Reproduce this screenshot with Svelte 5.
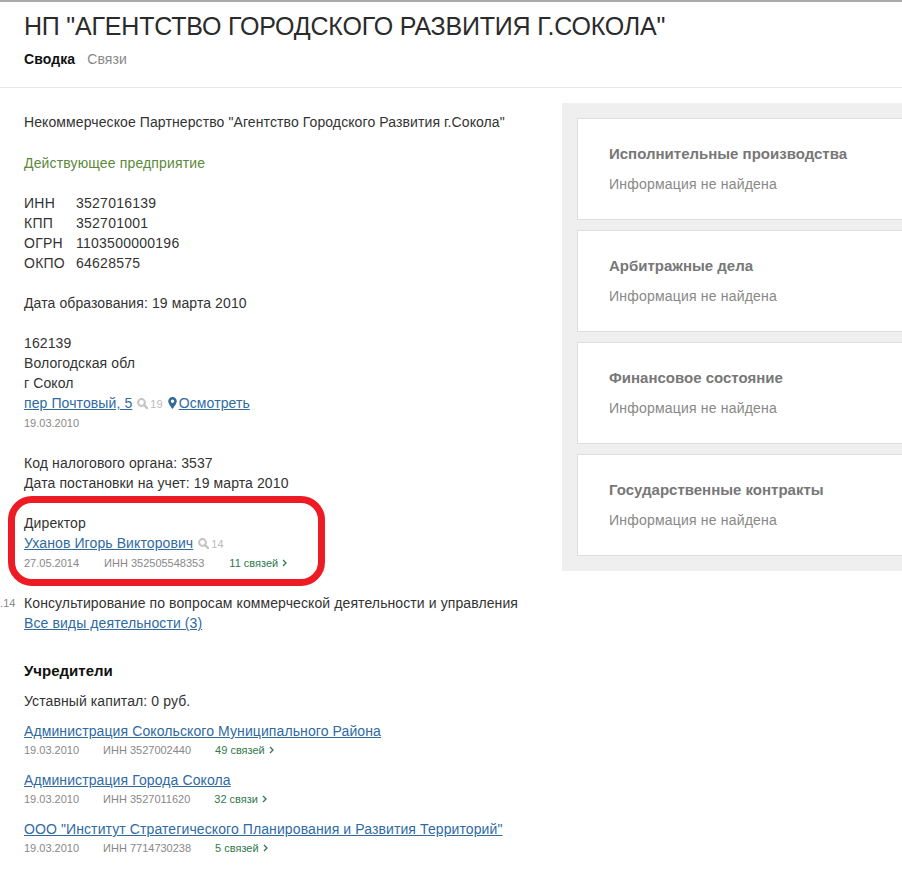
<script>
  const cards = ['Исполнительные производства', 'Арбитражные дела', 'Финансовое состояние', 'Государственные контракты'];
  const codes = [
    ['ИНН', '3527016139'],
    ['КПП', '352701001'],
    ['ОГРН', '1103500000196'],
    ['ОКПО', '64628575'],
  ];
  const founders = [
    { name: 'Администрация Сокольского Муниципального Района', inn: '3527002440', rel: '49 связей' },
    { name: 'Администрация Города Сокола', inn: '3527011620', rel: '32 связи' },
    { name: 'ООО "Институт Стратегического Планирования и Развития Территорий"', inn: '7714730238', rel: '5 связей' },
  ];
</script>

{#snippet lens()}
  <svg class="lens" width="11" height="11" viewBox="0 0 11 11" aria-hidden="true">
    <circle cx="4.5" cy="4.5" r="3.4" fill="none" stroke="#c4c4c4" stroke-width="2" />
    <path d="M7 7l3.2 3.2" stroke="#c4c4c4" stroke-width="2.4" stroke-linecap="round" />
  </svg>
{/snippet}

{#snippet chevron()}
  <svg class="chev" width="5" height="8" viewBox="0 0 5 8" aria-hidden="true">
    <path d="M1 1l3 3-3 3" fill="none" stroke="#2f7a4c" stroke-width="1.3" />
  </svg>
{/snippet}

<div class="page">
  <header>
    <h1>НП "АГЕНТСТВО ГОРОДСКОГО РАЗВИТИЯ Г.СОКОЛА"</h1>
    <nav><b>Сводка</b><a href="#links">Связи</a></nav>
  </header>

  <div class="body">
    <main>
      <p class="first">Некоммерческое Партнерство "Агентство Городского Развития г.Сокола"</p>
      <p class="status">Действующее предприятие</p>

      <div class="codes">
        {#each codes as [label, value]}
          <span>{label}</span><span>{value}</span>
        {/each}
      </div>

      <p>Дата образования: 19 марта 2010</p>

      <div class="block">
        <div>162139</div>
        <div>Вологодская обл</div>
        <div>г Сокол</div>
        <div class="row">
          <a href="#addr">пер Почтовый, 5</a>
          <span class="hits">{@render lens()}19</span>
          <svg class="pin" width="9" height="12" viewBox="0 0 9 12" aria-hidden="true">
            <path fill-rule="evenodd" fill="#336a9e" d="M4.5 0A4.3 4.3 0 0 0 .2 4.3C.2 7 4.5 12 4.5 12s4.3-5 4.3-7.7A4.3 4.3 0 0 0 4.5 0zm0 2.6a1.7 1.7 0 1 1 0 3.4 1.7 1.7 0 0 1 0-3.4z" />
          </svg>
          <a href="#map">Осмотреть</a>
        </div>
        <div class="meta"><span>19.03.2010</span></div>
      </div>

      <div class="block">
        <div>Код налогового органа: 3537</div>
        <div>Дата постановки на учет: 19 марта 2010</div>
      </div>

      <div class="block director">
        <div>Директор</div>
        <div class="row"><a href="#head">Уханов Игорь Викторович</a> <span class="hits">{@render lens()}14</span></div>
        <div class="meta">
          <span>27.05.2014</span>
          <span>ИНН 352505548353</span>
          <a class="rel" href="#rel">11 связей {@render chevron()}</a>
        </div>
        <div class="mark"></div>
      </div>

      <div class="block activity">
        <span class="cut">.14</span>
        <div>Консультирование по вопросам коммерческой деятельности и управления</div>
        <div><a href="#all">Все виды деятельности (3)</a></div>
      </div>

      <h2>Учредители</h2>
      <p class="capital">Уставный капитал: 0 руб.</p>

      {#each founders as f}
        <div class="founder">
          <div><a href="#f">{f.name}</a></div>
          <div class="meta">
            <span>19.03.2010</span>
            <span>ИНН {f.inn}</span>
            <a class="rel" href="#rel">{f.rel} {@render chevron()}</a>
          </div>
        </div>
      {/each}
    </main>

    <aside>
      {#each cards as title}
        <section>
          <h3>{title}</h3>
          <div>Информация не найдена</div>
        </section>
      {/each}
    </aside>
  </div>
</div>

<style>
  :global(body) { background: #fff; }
  .page {
    width: 902px;
    min-height: 872px;
    overflow: hidden;
    font: 14px/20px "Liberation Sans", Arial, sans-serif;
    letter-spacing: 0.1px;
    color: #333;
    border-top: 2px solid #a9a9a9;
    box-sizing: border-box;
  }
  header { box-sizing: border-box; height: 86px; padding: 9px 24px 0; border-bottom: 1px solid #e6e6e6; }
  h1 { margin: 0; font-size: 25px; line-height: 30px; font-weight: 400; letter-spacing: -0.2px; color: #2b2b2b; white-space: nowrap; }
  nav { margin-top: 8px; display: flex; gap: 12px; }
  nav b { color: #111; }
  nav a { color: #888; text-decoration: none; }

  .body { display: flex; align-items: flex-start; }
  main { flex: 1; min-width: 0; padding: 24px 0 0 24px; }
  p { margin: 20px 0 0; }
  p.first { margin: 0; }
  p.status { margin-top: 21px; color: #5b8a3a; letter-spacing: 0.15px; }

  .codes { margin-top: 20px; display: grid; grid-template-columns: 52px auto; justify-content: start; letter-spacing: 0.25px; }
  .block { margin-top: 20px; position: relative; }
  .row { height: 20px; }
  a { color: #2f6aa3; text-decoration: underline; }

  .hits { font-size: 11px; color: #bbb; margin-left: 1px; }
  .lens { vertical-align: -1px; margin-right: 2px; }
  .pin { vertical-align: -1px; margin: 0 -2px 0 1px; }

  .meta { display: flex; gap: 25px; height: 20px; font-size: 11px; letter-spacing: 0; color: #888; }
  .rel { color: #2f7a4c; text-decoration: none; }
  .chev { vertical-align: 0; margin-left: 1px; }

  .mark {
    position: absolute;
    left: -16px;
    top: -17px;
    width: 317px;
    height: 90px;
    box-sizing: border-box;
    border: 7px solid #ed1c24;
    border-radius: 24px;
    pointer-events: none;
  }

  .cut { position: absolute; left: -24px; top: 0; font-size: 11px; color: #888; }

  h2 { margin: 28px 0 0; font-size: 15px; line-height: 20px; letter-spacing: 0; color: #111; }
  p.capital { margin-top: 10px; }
  .founder { margin-top: 10px; }
  .founder .meta { margin-top: -1px; gap: 24px; }

  aside {
    width: 340px;
    flex: none;
    margin-top: 15px;
    padding: 15px 0 15px 15px;
    box-sizing: border-box;
    background: #efefef;
    display: flex;
    flex-direction: column;
    gap: 10px;
    letter-spacing: 0.2px;
  }
  section {
    height: 102px;
    box-sizing: border-box;
    padding: 25px 0 0 31px;
    background: #fff;
    border: 1px solid #dedede;
    border-right: 0;
    color: #888;
  }
  h3 { margin: 0 0 10px; font-size: 15px; line-height: 20px; letter-spacing: 0; color: #777; }
</style>
